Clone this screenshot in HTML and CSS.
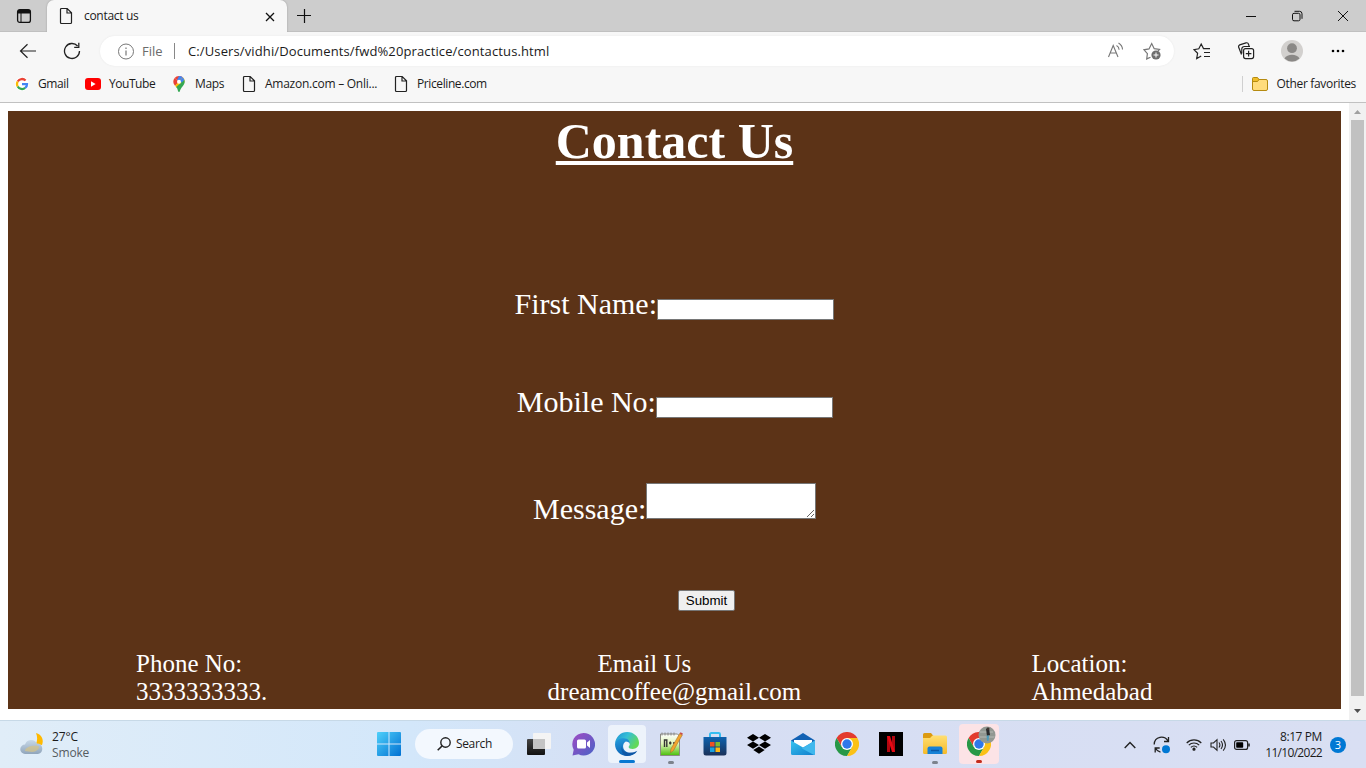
FILE: index.html
```html
<!DOCTYPE html>
<html lang="en">
<head>
<meta charset="utf-8">
<title>contact us</title>
<link rel="stylesheet" href="styles.css">
</head>
<body>
<svg class="defs" width="0" height="0">
  <defs>
    <symbol id="page" viewBox="0 0 14 18"><path d="M2.5 1.5h5.700l4.300 4.300v9.700a1 1 0 0 1-1 1h-9a1 1 0 0 1-1-1v-13a1 1 0 0 1 1-1zM8 1.500v4.500h4.500" fill="none" stroke="#222" stroke-width="1.200"/></symbol>
    <symbol id="chrome" viewBox="0 0 24 24">
      <path fill="#e33b2e" d="M22.400 6A12 12 0 0 0 1.600 6L6.800 15 12 12V6z"/>
      <path fill="#279847" d="M1.600 6A12 12 0 0 0 12 24l5.200-9-5.200-3-5.200 3z"/>
      <path fill="#fbc116" d="M12 24A12 12 0 0 0 22.400 6H12v6l5.200 3z"/>
      <circle cx="12" cy="12" r="6" fill="#fff"/><circle cx="12" cy="12" r="4.700" fill="#2f78ea"/>
    </symbol>
    <linearGradient id="win" x2="1" y2="1"><stop stop-color="#4fd0fa"/><stop offset="1" stop-color="#0070d2"/></linearGradient>
    <linearGradient id="chat" x2="1" y2="1"><stop stop-color="#a04bc4"/><stop offset="1" stop-color="#4963c6"/></linearGradient>
    <linearGradient id="edgeTop" x2="1" y2=".5"><stop stop-color="#1b8fd4"/><stop offset=".5" stop-color="#35bfd6"/><stop offset="1" stop-color="#62d957"/></linearGradient>
    <linearGradient id="edgeLow" x2=".3" y2="1"><stop stop-color="#249ddd"/><stop offset="1" stop-color="#0c62b5"/></linearGradient>
    <linearGradient id="store" x2="0" y2="1"><stop stop-color="#0e62ae"/><stop offset="1" stop-color="#1b3159"/></linearGradient>
    <linearGradient id="mail" x2="1" y2="1"><stop stop-color="#36c4f1"/><stop offset="1" stop-color="#117dcb"/></linearGradient>
    <linearGradient id="folder" x2="0" y2="1"><stop stop-color="#ffdf73"/><stop offset="1" stop-color="#f6ba28"/></linearGradient>
    <linearGradient id="note" x2="0" y2="1"><stop stop-color="#fff"/><stop offset=".45" stop-color="#dff5b8"/><stop offset="1" stop-color="#49bf09"/></linearGradient>
    <linearGradient id="cloud" x2="0" y2="1"><stop stop-color="#c8d9e9"/><stop offset="1" stop-color="#90a5bb"/></linearGradient>
    <linearGradient id="dark" x2="0" y2="1"><stop stop-color="#444"/><stop offset="1" stop-color="#111"/></linearGradient>
  </defs>
</svg>

<header class="tabs">
  <svg class="workspaces" width="16" height="16" viewBox="0 0 16 16"><rect x="1.600" y="1.600" width="12.800" height="12.800" rx="2.200" fill="none" stroke="#111" stroke-width="1.300"/><path d="M2 2h12v3.500H2z" fill="#111"/><path d="M5 5v9" stroke="#111"/></svg>
  <div class="tab">
    <svg width="14" height="18"><use href="#page"/></svg>
    <span class="tab-title">contact us</span>
    <svg class="tab-close" width="10" height="10" viewBox="0 0 10 10"><path d="M1 1l8 8M9 1L1 9" stroke="#111" stroke-width="1.300"/></svg>
  </div>
  <svg class="new-tab" width="14" height="14" viewBox="0 0 14 14"><path d="M7.500 0v14M0 6.500h14" stroke="#111" stroke-width="1.200"/></svg>
  <div class="window-buttons">
    <svg width="12" height="12" viewBox="0 0 12 12"><path d="M1 6.500h10" stroke="#111"/></svg>
    <svg width="12" height="12" viewBox="0 0 12 12" fill="none" stroke="#111"><rect x="1.500" y="3.300" width="7.500" height="7.500" rx="1.500"/><path d="M3.500 1.300h5A2.500 2.500 0 0 1 11 3.800v5"/></svg>
    <svg width="12" height="12" viewBox="0 0 12 12"><path d="M1 1l10 10M11 1L1 11" stroke="#111"/></svg>
  </div>
</header>

<nav class="toolbar">
  <svg class="back" width="18" height="16" viewBox="0 0 18 16"><path d="M17 8H2M8.500 1.200L1.500 8l7 6.800" fill="none" stroke="#222" stroke-width="1.200"/></svg>
  <svg class="reload" width="18" height="18" viewBox="0 0 18 18"><path d="M16.500 9A7.500 7.500 0 1 1 14.600 4M15.800.8V5.300H11.200" fill="none" stroke="#222" stroke-width="1.300"/></svg>
  <div class="address">
    <svg width="17" height="17" viewBox="0 0 17 17"><circle cx="8" cy="8.500" r="7.500" fill="none" stroke="#777"/><path d="M8 7.500v5M8 4.500v1.400" stroke="#777" stroke-width="1.200"/></svg>
    <span class="scheme">File</span>
    <span class="url">C:/Users/vidhi/Documents/fwd%20practice/contactus.html</span>
    <svg class="read" width="18" height="18" viewBox="0 0 18 18" fill="none" stroke="#777"><path d="M1.500 15L6.200 3.500 11 15M3 11h6.500M9.500 3.500c1.800 1 2.600 2.600 2.600 4.300M11.500 1c2.500 1.500 4 3.800 4 6.500" stroke-width="1.100"/></svg>
    <svg class="star" width="18" height="18" viewBox="0 0 18 18"><path d="M7.500 15.200l-3.800 1.700.7-5.300L1 7.800l5-.9L8.700 1.500l2.500 5.200 5.300.8-1.500 1.500" fill="none" stroke="#777" stroke-width="1.200"/><circle cx="13" cy="13" r="4.600" fill="#6d6d6d"/><path d="M13 10.500v5M10.500 13h5" stroke="#fff"/></svg>
  </div>
  <svg class="fav" width="18" height="18" viewBox="0 0 18 18" fill="none" stroke="#222" stroke-width="1.200"><path d="M8.200 14l-4.500 2.500.9-5.200L1 7.600l4.800-.8L8.200 2l2.300 4.600h6.500M11 10.500h6M11 14.500h6"/></svg>
  <svg class="collections" width="18" height="18" viewBox="0 0 18 18" fill="none" stroke="#222" stroke-width="1.200"><rect x="6.600" y="6.600" width="10" height="10" rx="2"/><path d="M11.600 8.800v5.600M8.800 11.600h5.600M4.500 12.500L1.600 5A2 2 0 0 1 2.700 2.900L9 .9a2 2 0 0 1 2.500 1.300l.6 2M4.800 11.500V7a2.500 2.500 0 0 1 2.500-2.500H13"/></svg>
  <svg class="profile" width="22" height="22" viewBox="0 0 22 22"><circle cx="11" cy="11" r="11" fill="#d2d0ce"/><circle cx="11" cy="8.200" r="4.900" fill="#8a8886"/><path d="M3.500 18.500c2.500-5 12.500-5 15 0a11 11 0 0 1-15 0z" fill="#8a8886"/></svg>
  <svg class="more" width="14" height="4" viewBox="0 0 14 4"><circle cx="2" cy="2" r="1.300"/><circle cx="7" cy="2" r="1.300"/><circle cx="12" cy="2" r="1.300"/></svg>
</nav>

<nav class="bookmarks">
  <svg class="bm-google" width="14" height="14" viewBox="0 0 14 14"><circle cx="7" cy="7" r="7" fill="#fff"/><g fill="none" stroke-width="2.300"><path d="M2.700 4.500A5 5 0 0 1 10.600 3.500" stroke="#ea4335"/><path d="M2.700 9.500a5 5 0 0 1 0-5" stroke="#fbbc05"/><path d="M2.700 9.500a5 5 0 0 0 7.500 1.400" stroke="#34a853"/><path d="M10.200 10.900A4.500 4.500 0 0 0 12 7.200H7" stroke="#4285f4"/></g></svg>
  <span class="bm-gmail">Gmail</span>
  <svg class="bm-tube" width="16" height="12" viewBox="0 0 16 12"><rect width="16" height="12" rx="3" fill="#f00"/><path d="M6 3.300v5.400L10.600 6z" fill="#fff"/></svg>
  <span class="bm-youtube">YouTube</span>
  <svg class="bm-pin" width="12" height="16" viewBox="0 0 12 16"><path d="M6 0a5.700 5.700 0 0 0-4.400 2L6 6l3.800-4.700A6 6 0 0 0 6 0z" fill="#ea4335"/><path d="M6 0q2.200 0 3.800 1.300L6 6 4 4z" fill="#4285f4"/><path d="M1.600 2C-.5 4.500.2 7.500 2 9.700L6 6z" fill="#ea4335"/><path d="M9.800 1.300L2 9.700 4 12l7-4.500c1.200-2.500.5-5-1.200-6.200z" fill="#fbbc04"/><path d="M9.800 1.300L6.500 5.200 9 7l2.400-3z" fill="#4285f4"/><path d="M11.400 4L3.200 11c1.500 1.800 1.500 3.500 2.100 4.500q.7 1 1.400 0C7.300 13.500 8 12.500 9.500 10.500 11.500 8 12 6.500 11.400 4z" fill="#34a853"/><circle cx="6" cy="5.700" r="2" fill="#fff"/></svg>
  <span class="bm-maps">Maps</span>
  <svg class="bm-page" width="14" height="18"><use href="#page"/></svg>
  <span class="bm-amazon">Amazon.com – Onli...</span>
  <svg class="bm-page" width="14" height="18"><use href="#page"/></svg>
  <span class="bm-price">Priceline.com</span>
  <div class="other">
    <svg width="16" height="14" viewBox="0 0 16 14"><rect x=".5" y="2.500" width="15" height="11" rx="1.500" fill="#ffdc7c" stroke="#b58a10"/><path d="M.5 4V1.500a1 1 0 0 1 1-1h4l1.500 2-1.500 2h-5z" fill="#efbd2a" stroke="#b58a10"/></svg>
    <span>Other favorites</span>
  </div>
</nav>

<div class="viewport">
  <main class="contact">
    <h1>Contact Us</h1>
    <form class="form">
      <label class="row name">First Name:<input type="text"></label>
      <label class="row mobile">Mobile No:<input type="text"></label>
      <label class="row message">Message:<textarea></textarea></label>
      <button type="button" class="submit">Submit</button>
    </form>
    <footer class="details">
      <div class="phone">Phone No:<br>3333333333.</div>
      <div class="email"><span class="email-title">Email Us</span><br>dreamcoffee@gmail.com</div>
      <div class="location">Location:<br>Ahmedabad</div>
    </footer>
  </main>
  <div class="scrollbar">
    <svg width="7" height="4" viewBox="0 0 7 4"><path d="M0 4L3.500 0 7 4z" fill="#a0a0a0"/></svg>
    <div class="thumb"></div>
    <svg width="7" height="4" viewBox="0 0 7 4"><path d="M0 0l3.500 4L7 0z" fill="#505050"/></svg>
  </div>
</div>

<footer class="taskbar">
  <div class="weather">
    <svg width="24" height="24" viewBox="0 0 24 24"><path d="M16 1c6 1.500 8 7 6 12l-6-1c1.500-4 1.500-7 0-11z" fill="#ffb900"/><path d="M5 22a4.700 4.700 0 0 1 0-9.500 6.500 6.500 0 0 1 12-1A5.300 5.300 0 0 1 18 22z" fill="url(#cloud)"/><path d="M5 19c0-4 7-6 13-5 3 1-1 6-6 6z" fill="#d5c386" opacity=".7"/></svg>
    <div class="weather-text"><span class="temp">27°C</span><span class="sky">Smoke</span></div>
  </div>
  <div class="apps">
    <div class="slot"><svg width="24" height="24" viewBox="0 0 24 24"><path d="M1 0h10.500v11.500H0V1a1 1 0 0 1 1-1zM12.500 0H23a1 1 0 0 1 1 1v10.500H12.500zM0 12.500h11.500V24H1a1 1 0 0 1-1-1zM12.500 12.500H24V23a1 1 0 0 1-1 1H12.500z" fill="url(#win)"/></svg></div>
    <div class="search"><svg width="14" height="14" viewBox="0 0 14 14"><circle cx="8.500" cy="5.500" r="4.700" fill="none" stroke="#222" stroke-width="1.400"/><path d="M5 9L.7 13.300" stroke="#222" stroke-width="1.600"/></svg><span>Search</span></div>
    <div class="slot"><svg width="24" height="24" viewBox="0 0 24 24"><rect y="7" width="18" height="16" rx="1" fill="url(#dark)"/><rect x="6" y="1" width="18" height="16" rx="1" fill="#f4f4f4"/><path d="M6 7h12v10H6z" fill="#c4c4c4"/></svg></div>
    <div class="slot"><svg width="24" height="24" viewBox="0 0 24 24"><path d="M12.500 1a11.300 11.300 0 1 1-5 21.300L1.500 23.500l1.200-5.700A11.300 11.300 0 0 1 12.500 1z" fill="url(#chat)"/><rect x="6" y="7.500" width="9" height="9" rx="1.500" fill="#fff"/><path d="M16 10.500L19 8v8l-3-2.500z" fill="#fff"/></svg></div>
    <div class="slot active"><svg width="24" height="24" viewBox="0 0 24 24"><path d="M0 11.500C.7 4.800 5.800 0 12.200 0 19 0 24 5 24 10.800c0 4-3 6.200-6.200 6.200-2.700 0-4.200-1-4.200-2 0-.8 1.200-1.300 1.200-3 0-2.300-2.300-4.600-5.500-4.600C5 7.400 1.300 9 0 11.500z" fill="url(#edgeTop)"/><path d="M0 12C.5 8 4.500 6.200 8.600 6.200c4.300 0 6.500 3 6.200 5.800-.8-1.800-2.300-2.500-4-2.500-4 2.200-3.800 9 2 10.900 3.700 1.100 7.200.1 9.500-1.400C20 22.200 16.300 24 12 24 5.400 24 0 18.600 0 12z" fill="url(#edgeLow)"/><path d="M10.200 9.700c-5.800 2.700-3.700 10.300 2.600 11 4 .4 7-.5 9.500-1.900-2.500 4-7.500 5.500-12 5C5 20.500 5.300 12 10.200 9.700z" fill="#1053a0" opacity=".75"/></svg><i class="mark"></i></div>
    <div class="slot"><svg width="24" height="24" viewBox="0 0 24 24"><path d="M1.500 2h17l2 2v19.500h-19z" fill="url(#note)" stroke="#8b8b83"/><path d="M3 .5v3M6 .5v3M9 .5v3M12 .5v3M15 .5v3" stroke="#888"/><path d="M5.500 15V8h2.300v7M10 11h2.500M14 11h2M11.300 9.500v3" fill="none" stroke="#333" stroke-width="1.400"/><path d="M20.700 1.500l2.600 1.500L14.500 18.500l-3 2.300.4-3.800z" fill="#f2a52f" stroke="#9f6622" stroke-width=".5"/><path d="M20.700 1.500l.8-1.300 2.400 1.400-.7 1.400z" fill="#c94946"/></svg><i class="mark"></i></div>
    <div class="slot"><svg width="24" height="24" viewBox="0 0 24 24"><path d="M7 7V2.300A1.300 1.300 0 0 1 8.300 1h7.400A1.300 1.300 0 0 1 17 2.300V7" fill="none" stroke="#35bdf0" stroke-width="2"/><path d="M.5 5h23v16a2.500 2.500 0 0 1-2.500 2.500H3A2.500 2.500 0 0 1 .5 21z" fill="url(#store)"/><path d="M7 10h4.500v4.500H7z" fill="#f05123"/><path d="M12.500 10H17v4.500h-4.500z" fill="#7fbb30"/><path d="M7 15.500h4.500V20H7z" fill="#19a2df"/><path d="M12.500 15.500H17V20h-4.500z" fill="#fdb813"/></svg></div>
    <div class="slot"><svg width="24" height="22" viewBox="0 0 24 22"><path d="M6 1l6 3.700-6 3.700-6-3.700zM18 1l6 3.700-6 3.700-6-3.700zM6 8.400l6 3.700-6 3.700-6-3.700zM18 8.400l6 3.700-6 3.700-6-3.700zM12 13.500l5.700 3.600L12 20.700l-5.700-3.600z"/></svg></div>
    <div class="slot"><svg width="24" height="24" viewBox="0 0 24 24"><path d="M0 8.500L12 1l12 7.500V13H0z" fill="#1262b4"/><path d="M3 8h18v5l-9 5-9-5z" fill="#fff"/><path d="M0 8.500l12 7 12-7V21.500a1.500 1.500 0 0 1-1.500 1.500h-21A1.500 1.500 0 0 1 0 21.500z" fill="url(#mail)"/><path d="M24 8.500L11 16.500 23 23a1.500 1.500 0 0 0 1-1.500z" fill="#40b8ed"/></svg></div>
    <div class="slot"><svg width="24" height="24"><use href="#chrome"/></svg></div>
    <div class="slot"><svg width="24" height="24" viewBox="0 0 24 24"><path d="M0 0h24v24H0z"/><path d="M8 4h3v16H8zM13 4h3v16h-3z" fill="#b20710"/><path d="M8 4h3l5 16h-3z" fill="#e50914"/></svg></div>
    <div class="slot"><svg width="24" height="24" viewBox="0 0 24 24"><path d="M0 2.500A1.500 1.500 0 0 1 1.500 1H8l2.500 3L8 7H0z" fill="#dc9a10"/><path d="M0 6h7l2.500-2.500h13A1.500 1.500 0 0 1 24 5v15.500a1.500 1.500 0 0 1-1.500 1.500h-21A1.500 1.500 0 0 1 0 20.500z" fill="url(#folder)"/><path d="M4.500 22v-5.500a2 2 0 0 1 2-2h11a2 2 0 0 1 2 2V22z" fill="#1681d6"/><path d="M8 18.500h8" stroke="#0a58a6" stroke-width="1.500"/></svg><i class="mark"></i></div>
    <div class="slot alert"><svg width="24" height="24"><use href="#chrome"/></svg><i class="mark"></i>
      <svg class="avatar" width="18" height="18" viewBox="0 0 18 18"><circle cx="9" cy="9" r="8.500" fill="#929892"/><path d="M2 6h13M1.500 11h15" stroke="#b5b9b4"/><path d="M8 3l3-1 1 7-3 1z" fill="#292a2c"/><path d="M8.500 9.500h2.700L10.500 15H9z" fill="#4d9ab8"/><circle cx="10" cy="2.800" r="1.400" fill="#403532"/></svg></div>
  </div>
  <div class="tray">
    <svg class="chevron" width="12" height="8" viewBox="0 0 12 8"><path d="M.7 7L6 1.500 11.300 7" fill="none" stroke="#222" stroke-width="1.400"/></svg>
    <svg class="sync" width="18" height="18" viewBox="0 0 18 18"><path d="M1.200 8.500C1.500 0 11.500-.8 15 5M15.500 1v4.500h-4.500M2.200 16.500V12h4.500M2.500 12.300c1.300 2.400 3 3.500 5 3.900" fill="none" stroke="#222" stroke-width="1.300"/><circle cx="13" cy="13.300" r="4" fill="#0078d4"/></svg>
    <svg class="wifi" width="16" height="13" viewBox="0 0 16 13" fill="none" stroke="#222" stroke-width="1.200"><path d="M.7 5a10.300 10.300 0 0 1 14.600 0M2.800 7.200a7.300 7.300 0 0 1 10.400 0M4.900 9.300a4.300 4.300 0 0 1 6.200 0"/><circle cx="8" cy="11.200" r="1" fill="#222"/></svg>
    <svg class="volume" width="17" height="14" viewBox="0 0 17 14" fill="none" stroke="#222" stroke-width="1.100"><path d="M1 5v4h2.500L7 12.300V1.700L3.500 5zM9 4.500q1.800 2.500 0 5M11 3q3 4 0 8M13.200 1.300q4.500 5.700 0 11.400"/></svg>
    <svg class="battery" width="17" height="10" viewBox="0 0 17 10"><rect x=".6" y=".6" width="13" height="8.800" rx="2" fill="none" stroke="#222" stroke-width="1.200"/><rect x="2.200" y="2.200" width="7" height="5.600" rx=".7"/><path d="M15 3.500v3" stroke="#222" stroke-width="1.600"/></svg>
    <div class="clock"><span class="time">8:17 PM</span><span class="date">11/10/2022</span></div>
    <span class="count">3</span>
  </div>
</footer>
</body>
</html>
```
FILE: styles.css
```css
* { box-sizing: border-box; }
body {
  margin: 0;
  width: 1366px;
  height: 768px;
  overflow: hidden;
  display: flex;
  flex-direction: column;
  background: #fff;
  font: 12px/16px "Open Sans", "Noto Sans", sans-serif;
  color: #1b1b1b;
}
svg { display: block; flex: none; }
span { white-space: nowrap; }
.defs { position: absolute; }

.tabs { display: flex; height: 32px; flex: none; background: #cdcdcd; border-bottom: 1px solid #c0c0c0; }
.workspaces { margin: 8px 0 0 16px; }
.tab { display: flex; align-items: center; width: 240px; height: 32px; margin-left: 15px; padding: 0 12px; background: #f7f7f7; border-radius: 7px 7px 0 0; box-shadow: 0 0 2px #999; clip-path: inset(0 -3px 0 -3px); }
.tab-title { margin-left: 11px; letter-spacing: -.3px; }
.tab-close { margin: 1px 0 0 auto; }
.new-tab { margin: 9px 0 0 10px; }
.window-buttons { display: flex; gap: 34px; margin: 10px 17px 0 auto; }

.toolbar { display: flex; align-items: center; height: 38px; flex: none; background: #f7f7f7; }
.back { margin-left: 19px; }
.reload { margin-left: 26px; }
.address { display: flex; align-items: center; width: 1074px; height: 30px; margin-left: 19px; padding: 0 13px 0 18px; background: #fff; border-radius: 15px; box-shadow: 0 0 2px #e6e6e6; }
.scheme { width: 33px; margin-left: 7px; border-right: 1px solid #888; font-size: 13px; color: #6b6b6b; }
.url { margin-left: 13px; font-size: 13px; letter-spacing: .12px; }
.read { margin-left: auto; }
.star { margin-left: 18px; }
.fav { margin-left: 19px; }
.collections { margin-left: 26px; }
.profile { margin-left: 26px; }
.more { margin-left: 28px; }

.bookmarks { display: flex; align-items: center; height: 33px; flex: none; padding-bottom: 5px; background: #f7f7f7; border-bottom: 1px solid #c1c1c1; letter-spacing: -.32px; }
.bm-google { margin-left: 15px; }
.bm-gmail { width: 47px; margin-left: 9px; letter-spacing: -.4px; }
.bm-youtube { width: 64px; margin-left: 8px; letter-spacing: -.45px; }
.bm-maps { width: 47px; margin-left: 10px; }
.bm-tube { margin: 0; }
.bm-amazon { width: 129px; margin-left: 9px; letter-spacing: -.25px; }
.bm-price { margin-left: 9px; letter-spacing: -.4px; }
.other { display: flex; align-items: center; gap: 8px; margin-left: auto; padding: 0 10px 0 9px; border-left: 1px solid #d0d0d0; }

.viewport { display: flex; height: 617px; flex: none; }
.contact { display: flex; flex-direction: column; width: 1333px; height: 598px; margin: 8px 8px 0; background: #5c3317; color: #fff; font: 30px/34px "Liberation Serif", "Times New Roman", serif; }
h1 { margin: 0; height: 58px; font-size: 50px; line-height: 60px; text-align: center; text-decoration: underline; text-decoration-thickness: 4px; text-underline-offset: 3px; }
.form { display: flex; flex-direction: column; padding-top: 118px; }
.row { display: flex; align-items: flex-end; height: 34px; }
.name { margin-left: 506.500px; }
.mobile { margin: 64px 0 0 508.800px; }
.message { height: 43px; margin: 64px 0 0 525px; }
input { width: 177px; height: 21px; margin: 0 0 1px; border: 1px solid #767676; background: #fff; }
textarea { width: 170px; height: 36px; margin: 0 0 7px; border: 1px solid #767676; background: #fff; }
.submit { width: 57px; height: 21px; margin: 64px 0 0 670px; padding: 0; border: 1px solid #767676; border-radius: 2px; background: #efefef; color: #000; font: 13.333px "Liberation Sans", Arial, sans-serif; }
.details { display: flex; margin-top: 39px; font-size: 25px; line-height: 28px; }
.phone { width: 411.600px; margin-left: 128px; }
.email { width: 484px; }
.email-title { margin-left: 50px; }
.scrollbar { display: flex; flex-direction: column; align-items: center; width: 17px; padding: 7px 0; background: #f1f1f1; }
.thumb { width: 13px; height: 577px; margin: 6px 0 13px; background: #c1c1c1; }

.taskbar { position: relative; display: flex; height: 48px; flex: none; background: linear-gradient(90deg, #e0edf8 0, #d3e7fa 30%, #d6def3 48%, #d9dff3 100%); border-top: 1px solid #c7d9e7; }
.weather { display: flex; width: 367px; padding: 11px 0 0 20px; gap: 8px; }
.weather-text { display: flex; flex-direction: column; margin-top: -3px; }
.temp { letter-spacing: -.1px; }
.sky { color: #555b61; letter-spacing: -.15px; }
.apps { display: flex; }
.slot { position: relative; display: flex; align-items: center; justify-content: center; width: 44px; height: 46px; }
.search { display: flex; align-items: center; width: 98px; height: 30px; margin: 8px 3px 0 4px; padding-left: 22px; gap: 5px; border-radius: 15px; background: #f3f8fe; }
.search + .slot { margin-left: 1px; }
.search span { letter-spacing: -.35px; }
.active, .alert { width: 38px; height: 38px; margin: 4px 3px; border-radius: 4px; background: #edf3fb; }
.alert { width: 40px; height: 40px; margin: 3px 2px; background: #fce3e6; }
.mark { position: absolute; left: 50%; bottom: 3px; width: 6px; height: 3px; margin-left: -3px; border-radius: 2px; background: #7d838d; }
.active .mark { bottom: 0; width: 16px; margin-left: -8px; background: #0878d2; }
.alert .mark { bottom: 1px; background: #c42b1c; }
.avatar { position: absolute; left: 19px; top: 2px; }
.tray { display: flex; align-items: center; margin-left: auto; padding-right: 20px; }
.sync { margin-left: 17px; }
.wifi { margin-left: 15px; }
.volume { margin-left: 8px; }
.battery { margin-left: 7px; }
.clock { display: flex; flex-direction: column; align-items: flex-end; width: 68px; margin-left: 3px; letter-spacing: -.7px; }
.time { letter-spacing: -.4px; }
.count { width: 16px; height: 16px; margin-left: 8px; border-radius: 50%; background: #0078d4; color: #fff; font-size: 11px; text-align: center; }
```
